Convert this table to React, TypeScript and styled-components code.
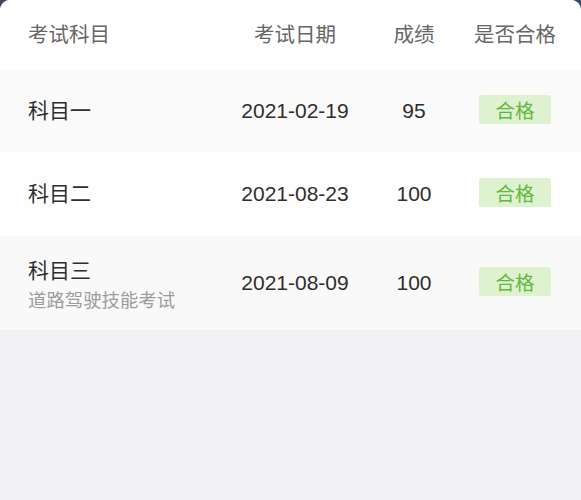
import React from 'react';
import styled, { createGlobalStyle } from 'styled-components';

const GlobalStyle = createGlobalStyle`
  html, body {
    margin: 0;
    padding: 0;
    background: #f2f2f6;
  }

  body {
    font-family: "Liberation Sans", "Noto Sans CJK SC", sans-serif;
  }
`;

const Page = styled.div`
  min-height: 500px;
  background: linear-gradient(to bottom, #3c4966 0, #3c4966 12px, #f2f2f6 12px);
`;

const Card = styled.div`
  background: #ffffff;
  border-radius: 10px 10px 0 0;
  overflow: hidden;
`;

const Row = styled.div<{ $bg: string; $height: number }>`
  display: grid;
  grid-template-columns: 206px 122px 116px 86px;
  align-items: center;
  height: ${(p) => p.$height}px;
  padding: 0 23px 0 28px;
  background: ${(p) => p.$bg};
`;

const HeadCell = styled.div<{ $left?: boolean }>`
  font-family: "Noto Sans CJK SC", sans-serif;
  font-size: 20.5px;
  color: #666666;
  text-align: ${(p) => (p.$left ? 'left' : 'center')};
  white-space: nowrap;
  margin-top: -4px;
`;

const NameCell = styled.div<{ $single: boolean }>`
  display: flex;
  flex-direction: column;
  margin-top: ${(p) => (p.$single ? '-4px' : '0')};
`;

const Title = styled.span`
  font-family: "Noto Sans CJK SC", sans-serif;
  font-size: 21px;
  line-height: 28px;
  color: #2e2e2e;
`;

const Sub = styled.span`
  font-family: "Noto Sans CJK SC", sans-serif;
  font-size: 18.4px;
  line-height: 24px;
  color: #9c9c9c;
  margin-top: 4px;
`;

const Value = styled.div`
  font-size: 21px;
  color: #2e2e2e;
  text-align: center;
  white-space: nowrap;
  margin-top: -1px;
`;

const Badge = styled.span`
  justify-self: center;
  display: inline-block;
  width: 72px;
  height: 29px;
  line-height: 29px;
  text-align: center;
  background: #def2d0;
  color: #62b83c;
  font-family: "Noto Sans CJK SC", sans-serif;
  font-size: 19.5px;
  border-radius: 2px;
  margin-top: -3px;
`;

type Exam = {
  name: string;
  sub?: string;
  date: string;
  score: number;
  bg: string;
  height: number;
};

const exams: Exam[] = [
  { name: '科目一', date: '2021-02-19', score: 95, bg: '#fafafa', height: 82 },
  { name: '科目二', date: '2021-08-23', score: 100, bg: '#fefefe', height: 84 },
  { name: '科目三', sub: '道路驾驶技能考试', date: '2021-08-09', score: 100, bg: '#f9f9f9', height: 94 },
];

export default function App() {
  return (
    <Page>
      <GlobalStyle />
      <Card>
        <Row $bg="#ffffff" $height={70}>
          <HeadCell $left>考试科目</HeadCell>
          <HeadCell>考试日期</HeadCell>
          <HeadCell>成绩</HeadCell>
          <HeadCell>是否合格</HeadCell>
        </Row>
        {exams.map((e) => (
          <Row key={e.name} $bg={e.bg} $height={e.height}>
            <NameCell $single={!e.sub}>
              <Title>{e.name}</Title>
              {e.sub && <Sub>{e.sub}</Sub>}
            </NameCell>
            <Value>{e.date}</Value>
            <Value>{e.score}</Value>
            <Badge>合格</Badge>
          </Row>
        ))}
      </Card>
    </Page>
  );
}
